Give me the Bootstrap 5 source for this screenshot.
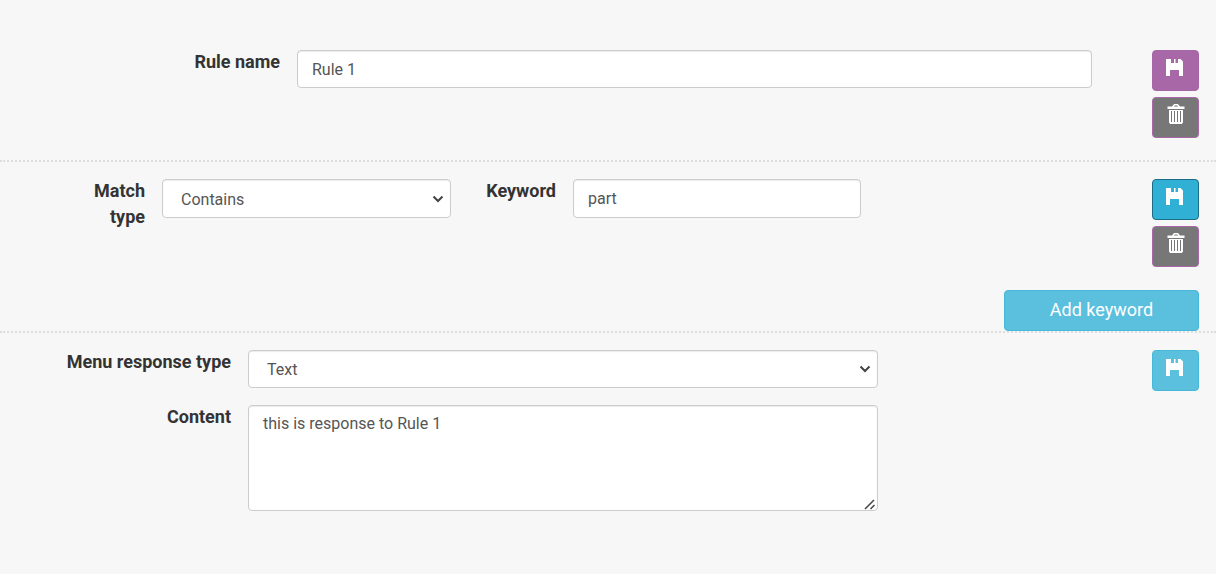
<!DOCTYPE html>
<html lang="en">
<head>
<meta charset="utf-8">
<meta name="viewport" content="width=device-width, initial-scale=1">
<title>Auto-reply rules</title>
<link href="https://cdn.jsdelivr.net/npm/bootstrap@5.3.0/dist/css/bootstrap.min.css" rel="stylesheet">
<style>
body{font-family:Roboto,sans-serif;font-size:18px;line-height:26px;color:#333;background:#fff}
.rules{background:#f7f7f7;margin-right:15px}
.rule-part{padding:17px 17px 0 0;border-top:2px dotted #ddd}
.rule-head{padding-top:50px;padding-bottom:22px;border-top:0}
.fields{display:grid;column-gap:17px;row-gap:17px;align-items:start;align-content:start}
.fields-name{grid-template-columns:minmax(0,280fr) minmax(0,795fr) minmax(0,43fr)}
.fields-match{grid-template-columns:minmax(0,145fr) minmax(0,289fr) minmax(0,88fr) minmax(0,288fr) minmax(0,274fr)}
.fields-reply{grid-template-columns:minmax(0,231fr) minmax(0,630fr) minmax(0,257fr)}
.fields label{font-weight:700;line-height:24px}
.fields-match label{line-height:26px;margin-top:-1px}
.fields-match label:first-child{padding-left:60px}
.fields-reply label{grid-column:1}
.fields-reply .form-control,.fields-reply .form-select{grid-column:2}
.fields .form-control,.fields .form-select{font-size:16px;line-height:24px;height:38px;padding:6px 14px;color:#555;border-color:#ccc;border-radius:4px;background-color:#fff;box-shadow:inset 0 1px 1px rgba(0,0,0,.08)}
.fields .form-select{padding:7px 30px 5px 18px;background-image:url("data:image/svg+xml,%3Csvg xmlns='http://www.w3.org/2000/svg' viewBox='0 0 12 8'%3E%3Cpath d='M1.5 1.5 6 6l4.500-4.500' fill='none' stroke='%23444' stroke-width='2'/%3E%3C/svg%3E");background-size:12px 8px;background-position:right 6px center}
.fields-match .form-control,.fields-match .form-select{height:39px}
.fields textarea.form-control{height:106px;background:#fff url("data:image/svg+xml,%3Csvg xmlns='http://www.w3.org/2000/svg' viewBox='0 0 12 12'%3E%3Cpath d='M1 11 10 2M6.500 11 10.500 7' fill='none' stroke='%23444' stroke-width='1.500'/%3E%3C/svg%3E") no-repeat right 1px bottom 0/12px 12px}
textarea::-webkit-resizer{background:transparent}
.actions{width:47px;gap:6px}
.btn{border-radius:4px;color:#fff;font-size:18px;line-height:26px;padding:5px 14px 7px;height:41px}
.btn:hover{color:#fff}
.btn-icon{padding:0;width:47px}
.btn-icon svg{display:block;margin:0 auto 8px}
.btn-save-rule{background:#a868a8;border-color:#a667a6}
.btn-remove{background:#777;border-color:#a868a8}
.btn-save-word{background:#31b0d5;border-color:#1b6d85}
.btn-soft{background:#5bc0de;border-color:#46b8da}
.btn-add{width:195px;margin-top:23px}
.rule-reply{min-height:241px}
</style>
</head>
<body>
<svg class="d-none" aria-hidden="true">
<symbol id="save" viewBox="0 0 21 22"><path d="M1 3h5v4h7V3h2.500L18 5.500V20h-4v-6H5v6H1zM9 3h1.500v4.500H9z"/></symbol>
<symbol id="trash" viewBox="0 0 21 22"><path fill-rule="evenodd" d="M7 3.500 9 1h4l2 2.500h4.500V6h-17V3.500zM9 3.500h4l-.6-1H9.600zM4 7h14v12.500L16.800 21H5.200L4 19.500zM6 8v11h1V8zM9 8v11h1V8zM12 8v11h1V8zM15 8v11h1V8z"/></symbol>
</svg>
<main class="rules min-vh-100">
<form>
<section class="rule-part rule-head d-flex">
<div class="fields fields-name flex-grow-1">
<label class="text-end" for="name">Rule name</label>
<input class="form-control" id="name" type="text" value="Rule 1">
</div>
<div class="actions d-flex flex-column flex-shrink-0">
<button type="button" class="btn btn-icon btn-save-rule" aria-label="Save rule"><svg width="21" height="22" fill="currentColor"><use href="#save"/></svg></button>
<button type="button" class="btn btn-icon btn-remove" aria-label="Delete rule"><svg width="21" height="22" fill="currentColor"><use href="#trash"/></svg></button>
</div>
</section>
<section class="rule-part">
<div class="d-flex">
<div class="fields fields-match flex-grow-1">
<label class="text-end" for="match">Match type</label>
<select class="form-select" id="match"><option>Contains</option><option>Exact</option></select>
<label class="text-end" for="keyword">Keyword</label>
<input class="form-control" id="keyword" type="text" value="part">
</div>
<div class="actions d-flex flex-column flex-shrink-0">
<button type="button" class="btn btn-icon btn-save-word" aria-label="Save keyword"><svg width="21" height="22" fill="currentColor"><use href="#save"/></svg></button>
<button type="button" class="btn btn-icon btn-remove" aria-label="Delete keyword"><svg width="21" height="22" fill="currentColor"><use href="#trash"/></svg></button>
</div>
</div>
<div class="d-flex justify-content-end"><button type="button" class="btn btn-soft btn-add">Add keyword</button></div>
</section>
<section class="rule-part rule-reply d-flex">
<div class="fields fields-reply flex-grow-1">
<label class="text-end" for="reply">Menu response type</label>
<select class="form-select" id="reply"><option>Text</option><option>Menu</option></select>
<label class="text-end" for="content">Content</label>
<textarea class="form-control" id="content">this is response to Rule 1</textarea>
</div>
<div class="actions d-flex flex-column flex-shrink-0">
<button type="button" class="btn btn-icon btn-soft" aria-label="Save response"><svg width="21" height="22" fill="currentColor"><use href="#save"/></svg></button>
</div>
</section>
</form>
</main>
<script src="https://cdn.jsdelivr.net/npm/bootstrap@5.3.0/dist/js/bootstrap.bundle.min.js"></script>
</body>
</html>
